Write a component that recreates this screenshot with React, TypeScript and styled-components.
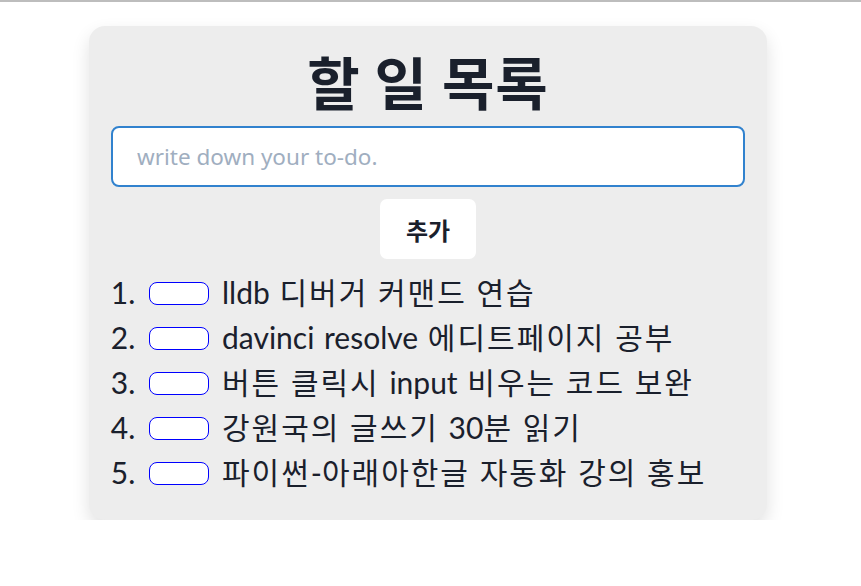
import { useState } from 'react';
import styled, { createGlobalStyle } from 'styled-components';

const GlobalStyle = createGlobalStyle`
	html, body {
		margin: 0;
		padding: 0;
		background: #ffffff;
	}
	body {
		font-family: "Noto Sans", "Noto Sans CJK KR", sans-serif;
		color: #1a202c;
		border-top: 2px solid #bdbdbd;
	}
`;

const Page = styled.div`
	display: flex;
	justify-content: center;
	padding: 24px 5px 0 0;
`;

const Card = styled.section`
	width: 678px;
	box-sizing: border-box;
	background: #ededed;
	border-radius: 16px;
	box-shadow: 0 8px 18px rgba(0, 0, 0, 0.12);
	padding: 18px 22px 25px;
	display: flex;
	flex-direction: column;
	align-items: center;
`;

const Title = styled.h1`
	margin: 0 0 10px;
	font-size: 57px;
	line-height: 72px;
	font-weight: 700;
	font-family: "Noto Sans CJK KR", sans-serif;
	letter-spacing: 1px;
	color: #1a202c;
`;

const TodoInput = styled.input`
	width: 100%;
	height: 61px;
	box-sizing: border-box;
	border: 2px solid #3182ce;
	border-radius: 8px;
	background: #ffffff;
	padding: 0 24px;
	font-size: 22.5px;
	font-family: "Noto Sans", "Noto Sans CJK KR", sans-serif;
	color: #1a202c;
	outline: none;

	&::placeholder {
		color: #a0aec0;
	}
`;

const AddButton = styled.button`
	margin-top: 12px;
	width: 96px;
	height: 60px;
	border: none;
	border-radius: 7px;
	background: #ffffff;
	font-family: "Noto Sans CJK KR", sans-serif;
	font-size: 24px;
	font-weight: 700;
	color: #1a202c;
	cursor: pointer;
`;

const List = styled.ol`
	align-self: stretch;
	margin: 11px 0 0;
	padding: 0 0 0 34px;
	font-size: 30px;
	line-height: 45px;
	word-spacing: 2px;
	font-family: "Lato", "Noto Sans CJK KR", sans-serif;
	color: #1a202c;
`;

const Item = styled.li`
	padding-left: 4px;
	white-space: nowrap;
`;

// hangul runs are set a bit looser, like the wider korean face in the original
const Hangul = styled.span`
	letter-spacing: 2px;
`;

const DoneButton = styled.button`
	display: inline-block;
	vertical-align: 0;
	width: 60px;
	height: 23px;
	margin-right: 13px;
	padding: 0;
	border: 1px solid #0000ff;
	border-radius: 8px;
	background: #ffffff;
	cursor: pointer;
`;

const todos = [
	'lldb 디버거 커맨드 연습',
	'davinci resolve 에디트페이지 공부',
	'버튼 클릭시 input 비우는 코드 보완',
	'강원국의 글쓰기 30분 읽기',
	'파이썬-아래아한글 자동화 강의 홍보',
];

const TodoText = ({ text }: { text: string }) => (
	<>
		{text.split(/([가-힣]+)/).map((part, i) =>
			/[가-힣]/.test(part) ? <Hangul key={i}>{part}</Hangul> : part
		)}
	</>
);

export default function App() {
	const [text, setText] = useState('');

	return (
		<>
			<GlobalStyle />
			<Page>
				<Card>
					<Title>할 일 목록</Title>
					<TodoInput
						value={text}
						onChange={(e) => setText(e.target.value)}
						placeholder="write down your to-do."
					/>
					<AddButton>추가</AddButton>
					<List>
						{todos.map((todo) => (
							<Item key={todo}>
								<DoneButton />
								<TodoText text={todo} />
							</Item>
						))}
					</List>
				</Card>
			</Page>
		</>
	);
}
